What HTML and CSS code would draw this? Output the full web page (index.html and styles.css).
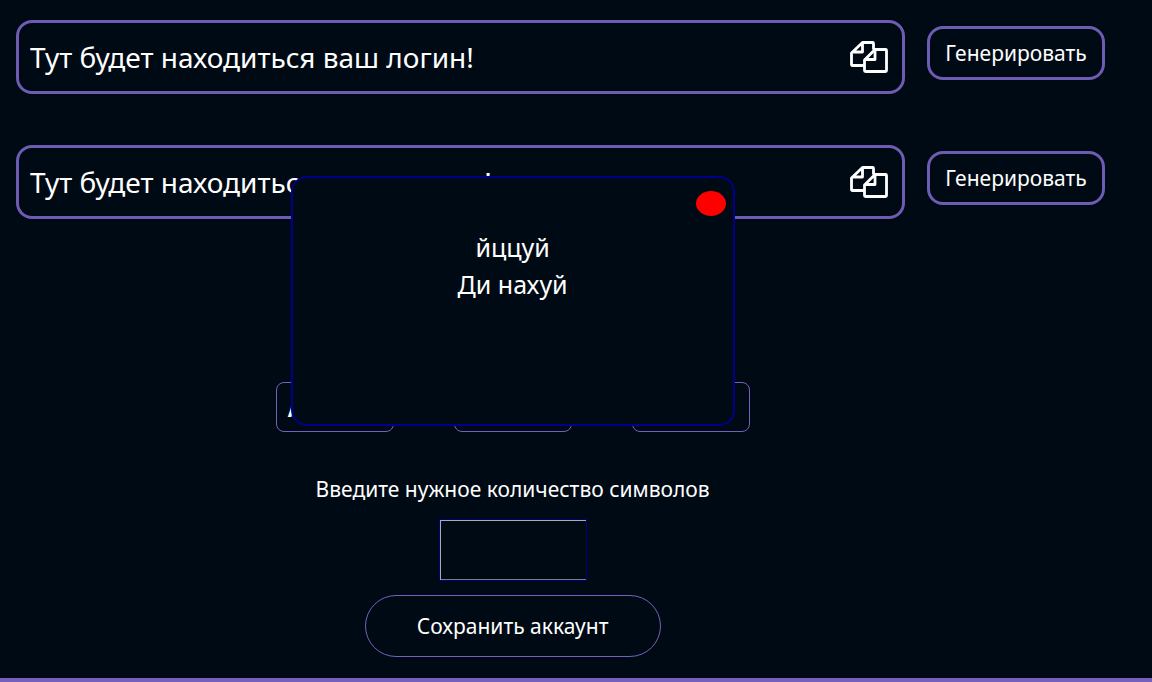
FILE: index.html
```html
<!DOCTYPE html>
<html lang="ru">
<head>
<meta charset="utf-8">
<meta name="viewport" content="width=device-width, initial-scale=1">
<title>Генератор аккаунта</title>
<link rel="stylesheet" href="styles.css">
</head>
<body>
<svg class="sprite" aria-hidden="true">
  <symbol id="copy" viewBox="0 0 38 32">
    <path d="M14 24.500H2.500Q1.500 24.500 1.500 23.500V12L12.500 1.500H22.500Q23.500 1.500 23.500 2.500V8.500M12.500 2V11H2M14.500 19L25 8.500H35.500Q36.500 8.500 36.500 9.500V29.500Q36.500 30.500 35.500 30.500H15.500Q14.500 30.500 14.500 29.500ZM15 18.500H25V9" fill="none" stroke="currentColor" stroke-width="2.800" stroke-linejoin="round"/>
  </symbol>
</svg>
<main class="page">
  <section class="rows">
    <div class="row">
      <div class="field">
        <output class="value">Тут будет находиться ваш логин!</output>
        <button class="copy" type="button" aria-label="Копировать логин"><svg><use href="#copy"/></svg></button>
      </div>
      <button class="generate" type="button">Генерировать</button>
    </div>
    <div class="row">
      <div class="field">
        <output class="value">Тут будет находиться ваш пароль!</output>
        <button class="copy" type="button" aria-label="Копировать пароль"><svg><use href="#copy"/></svg></button>
      </div>
      <button class="generate" type="button">Генерировать</button>
    </div>
  </section>
  <section class="controls">
    <div class="options">
      <button class="option" type="button">A-Z</button>
      <button class="option" type="button">a-z</button>
      <button class="option" type="button">0-9</button>
    </div>
    <label class="caption" for="length">Введите нужное количество символов</label>
    <input class="length" id="length" type="text" inputmode="numeric">
    <button class="save" type="button">Сохранить аккаунт</button>
  </section>
  <div class="overlay">
    <div class="dialog" role="dialog" aria-label="йццуй">
      <button class="close" type="button" aria-label="Закрыть"></button>
      <p>йццуй</p>
      <p>Ди нахуй</p>
    </div>
  </div>
</main>
<hr class="divider">
</body>
</html>
```
FILE: styles.css
```css
* { box-sizing: border-box; }

body {
  margin: 0;
  background: #000a14;
  color: #fff;
  font-family: "Noto Sans", "Open Sans", sans-serif;
  overflow-x: hidden;
}

button, input {
  background: transparent;
  color: inherit;
  font: inherit;
  padding: 0;
}

.sprite { position: absolute; width: 0; height: 0; }

.page { position: relative; padding-top: 20px; }

.rows {
  display: grid;
  gap: 51px;
  padding: 0 47px 0 16px;
}

.row {
  display: flex;
  align-items: flex-start;
  gap: 22px;
}

.field {
  flex: 1;
  display: flex;
  align-items: center;
  justify-content: space-between;
  min-height: 74px;
  padding: 0 14px 0 11px;
  border: 3px solid #6e5bb2;
  border-radius: 16px;
}

.value { font-size: 28px; line-height: 36px; }

.copy { border: 0; width: 38px; height: 32px; }
.copy svg { display: block; width: 38px; height: 32px; }

.generate {
  width: 178px;
  height: 54px;
  margin-top: 6px;
  border: 3px solid #6e5bb2;
  border-radius: 16px;
  font-size: 21px;
}

.controls {
  display: flex;
  flex-direction: column;
  align-items: center;
  width: 89%;
  padding-top: 163px;
}

.options { display: flex; gap: 60px; }

.option {
  width: 118px;
  height: 50px;
  padding: 4px 11px 0;
  border: 1px solid #7561bd;
  border-radius: 8px;
  font-size: 21px;
  font-weight: 700;
  text-align: left;
}

.caption {
  margin-top: 43px;
  font-size: 21px;
  line-height: 28px;
}

.length {
  width: 148px;
  height: 62px;
  margin-top: 16px;
  border: 1px solid #00007a;
  box-shadow: inset 1px 1px #a9a9b8, inset 0 -1px #7c7c84;
  text-align: center;
}

.save {
  width: 296px;
  height: 62px;
  margin-top: 14px;
  border: 1px solid #7561bd;
  border-radius: 32px;
  font-size: 21px;
}

.overlay {
  position: absolute;
  top: 176px;
  left: 0;
  width: 89%;
  display: flex;
  justify-content: center;
}

.dialog {
  width: 444px;
  min-height: 250px;
  padding: 13px 7px;
  border: 2px solid #00008b;
  border-radius: 16px;
  background: #000a14;
  font-size: 25px;
  line-height: 37px;
  text-align: center;
}

.dialog p { margin: 0; }

.close {
  display: block;
  width: 30px;
  height: 25px;
  margin: 0 0 13px auto;
  border: 0;
  border-radius: 50%;
  background: #f00;
}

.divider {
  height: 4px;
  margin: 21px 0 0;
  border: 0;
  background: #7561bd;
}
```
